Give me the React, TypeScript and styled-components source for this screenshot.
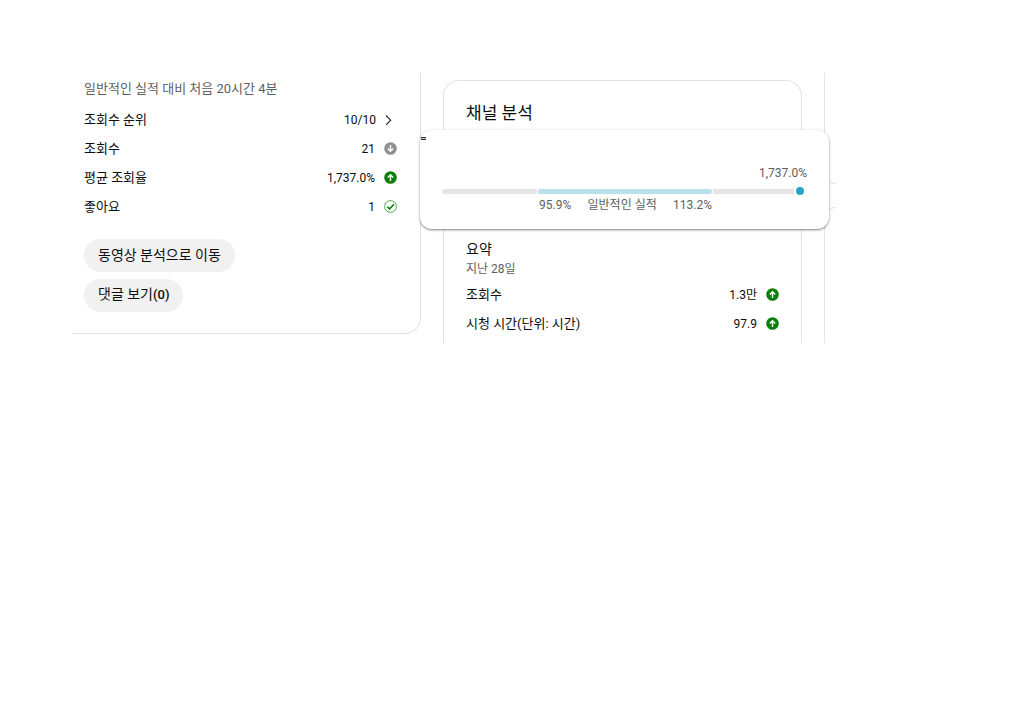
import React from "react";
import styled, { createGlobalStyle } from "styled-components";

const GlobalStyle = createGlobalStyle`
  * { box-sizing: border-box; }
  body {
    margin: 0;
    background: #fff;
    color: #0d0d0d;
    font-family: Roboto, "Noto Sans CJK KR", sans-serif;
    font-size: 13px;
    line-height: 20px;
  }
`;

const Page = styled.main`
  padding: 73px 188px 73px 72px;
`;

const Board = styled.div`
  display: grid;
  grid-template-columns: minmax(0, 349fr) minmax(0, 359fr) 12px;
  column-gap: 22px;
`;

const VideoCard = styled.section`
  align-self: start;
  padding: 6px 23px 21px 12px;
  border: solid #e2e2e2;
  border-width: 0 1px 1px 0;
  border-bottom-right-radius: 16px;
`;

const ChannelCard = styled.section`
  position: relative;
  margin-top: 7px;
  padding: 20px 22px 5px 22px;
  border: 1px solid #e2e2e2;
  border-bottom: 0;
  border-radius: 16px 16px 0 0;
`;

const SideColumn = styled.div`
  display: flex;
  flex-direction: column;
  gap: 23px;
`;

const SideCard = styled.div<{ $edge: "top" | "bottom" }>`
  border-left: 1px solid #e2e2e2;
  ${({ $edge }) =>
    $edge === "bottom"
      ? "height: 111px; border-bottom: 1px solid #e2e2e2; border-bottom-left-radius: 16px;"
      : "flex: 1; border-top: 1px solid #e2e2e2; border-top-left-radius: 16px;"}
`;

const Caption = styled.p<{ $size?: number }>`
  margin: 0;
  color: #606060;
  font-size: ${({ $size = 12 }) => $size}px;
`;

const Metrics = styled.dl<{ $top: number }>`
  margin: ${({ $top }) => $top}px 0 0;
`;

const MetricRow = styled.div`
  display: flex;
  align-items: center;
  height: 29px;
`;

const MetricName = styled.dt`
  flex: 1;
`;

const MetricValue = styled.dd<{ $gap?: number }>`
  display: flex;
  align-items: center;
  gap: ${({ $gap = 9 }) => $gap}px;
  margin: 0;
  font-size: 12px;
`;

const Actions = styled.div`
  display: flex;
  flex-direction: column;
  align-items: flex-start;
  gap: 7px;
  margin-top: 18px;
`;

const PillButton = styled.button`
  height: 33px;
  padding: 0 14px 2px;
  border: 0;
  border-radius: 17px;
  background: #f1f1f1;
  color: #0d0d0d;
  font: 400 14px/20px Roboto, "Noto Sans CJK KR", sans-serif;
  cursor: pointer;
`;

const Count = styled.span`
  font-size: 13px;
  font-weight: 500;
`;

const CardTitle = styled.h2`
  margin: 0;
  font-size: 17px;
  font-weight: 400;
  line-height: 24px;
`;

const SectionTitle = styled.h3`
  margin: 114px 0 0;
  font-size: 14px;
  font-weight: 400;
  line-height: 20px;
`;

const Popup = styled.div`
  position: absolute;
  top: 49px;
  left: -24px;
  right: -28px;
  height: 99px;
  padding: 33px 22px 0;
  border-radius: 12px;
  background: #fff;
  color: #606060;
  font-size: 12px;
  box-shadow: 0 1px 2px rgba(0, 0, 0, 0.4), 0 1px 4px rgba(0, 0, 0, 0.12);
`;

const Grip = styled.svg`
  position: absolute;
  top: 6px;
  left: 1px;
`;

const PopupValue = styled.div`
  text-align: right;
`;

const Track = styled.div`
  display: flex;
  align-items: center;
  height: 8px;
  margin-top: 4px;
  padding-right: 3px;
`;

const Segment = styled.div<{ $share: number; $kind: "start" | "typical" | "end" }>`
  flex: ${({ $share }) => $share} 1 0;
  height: 5px;
  margin-right: ${({ $kind }) => ($kind === "end" ? 2 : 1)}px;
  background: ${({ $kind }) => ($kind === "typical" ? "#b9e1ed" : "#e5e5e5")};
  border-radius: ${({ $kind }) =>
    $kind === "start" ? "3px 0 0 3px" : $kind === "typical" ? "3px" : "0"};
`;

const Dot = styled.div`
  width: 8px;
  height: 8px;
  border-radius: 50%;
  background: #2ba3c9;
`;

const RangeLabels = styled.div`
  display: flex;
  justify-content: space-between;
  margin: 0 95px 0 97px;
`;

type Kind = "next" | "down" | "up" | "same";

function StatusIcon({ kind }: { kind: Kind }) {
  if (kind === "next") {
    return (
      <svg width="17" height="13" viewBox="0 0 17 13" fill="none" stroke="#222" strokeWidth="1.1" aria-hidden="true">
        <path d="M6 2.5l4.7 4.7L6 11.9" />
      </svg>
    );
  }
  if (kind === "same") {
    return (
      <svg width="13" height="13" viewBox="0 0 13 13" fill="none" stroke="#0a820a" aria-hidden="true">
        <circle cx="6.5" cy="6.5" r="5.9" strokeWidth="0.7" />
        <path d="M3.2 6.7l2.3 2.2L10 4.4" strokeWidth="1.5" />
      </svg>
    );
  }
  const up = kind === "up";
  return (
    <svg width="13" height="13" viewBox="0 0 13 13" fill="none" aria-hidden="true">
      <circle cx="6.5" cy="6.5" r="6.3" fill={up ? "#078007" : "#909090"} />
      <path
        d={up ? "M6.5 10V3.9M3.8 6.4l2.7-2.7 2.7 2.7" : "M6.5 3v6.1M3.8 6.6l2.7 2.7 2.7-2.7"}
        stroke="#fff"
        strokeWidth="1.4"
      />
    </svg>
  );
}

function Metric({ name, value, kind, gap }: { name: string; value: string; kind: Kind; gap?: number }) {
  return (
    <MetricRow>
      <MetricName>{name}</MetricName>
      <MetricValue $gap={gap}>
        {value}
        <StatusIcon kind={kind} />
      </MetricValue>
    </MetricRow>
  );
}

export default function App() {
  return (
    <Page>
      <GlobalStyle />
      <Board>
        <VideoCard>
          <Caption $size={13}>일반적인 실적 대비 처음 20시간 4분</Caption>
          <Metrics $top={6}>
            <Metric name="조회수 순위" value="10/10" kind="next" gap={4} />
            <Metric name="조회수" value="21" kind="down" />
            <Metric name="평균 조회율" value="1,737.0%" kind="up" />
            <Metric name="좋아요" value="1" kind="same" />
          </Metrics>
          <Actions>
            <PillButton type="button">동영상 분석으로 이동</PillButton>
            <PillButton type="button">
              댓글 보기<Count>(0)</Count>
            </PillButton>
          </Actions>
        </VideoCard>
        <ChannelCard>
          <CardTitle>채널 분석</CardTitle>
          <SectionTitle>요약</SectionTitle>
          <Caption>지난 28일</Caption>
          <Metrics $top={1}>
            <Metric name="조회수" value="1.3만" kind="up" />
            <Metric name="시청 시간(단위: 시간)" value="97.9" kind="up" />
          </Metrics>
          <Popup role="tooltip">
            <Grip width="5" height="5" viewBox="0 0 5 5" aria-hidden="true">
              <path d="M0 1h5v3H0z" fill="#bbb" />
              <path d="M0 1.5h5M0 3.5h5" stroke="#333" />
            </Grip>
            <PopupValue>1,737.0%</PopupValue>
            <Track>
              <Segment $kind="start" $share={96} />
              <Segment $kind="typical" $share={175} />
              <Segment $kind="end" $share={81} />
              <Dot />
            </Track>
            <RangeLabels>
              <span>95.9%</span>
              <span>일반적인 실적</span>
              <span>113.2%</span>
            </RangeLabels>
          </Popup>
        </ChannelCard>
        <SideColumn>
          <SideCard $edge="bottom" />
          <SideCard $edge="top" />
        </SideColumn>
      </Board>
    </Page>
  );
}
